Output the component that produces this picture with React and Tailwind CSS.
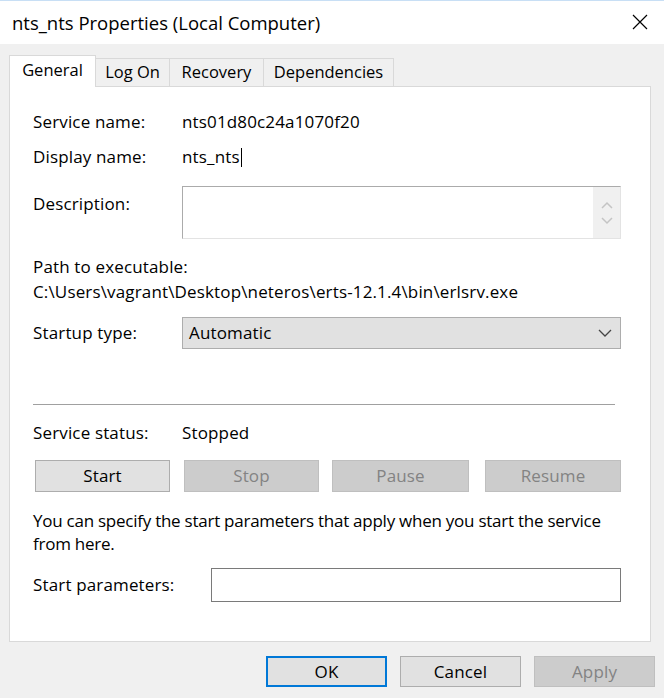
import React from "react";

const font = { fontFamily: '"Open Sans", "Noto Sans", sans-serif' };

function Btn({ label, disabled, className = "", primary }) {
  return (
    <div
      className={`flex items-center justify-center border ${
        primary
          ? "border-[#0078d7] border-2 bg-[#e1e1e1] text-black"
          : disabled
          ? "border-[#bfbfbf] bg-[#cccccc] text-[#838383]"
          : "border-[#adadad] bg-[#e1e1e1] text-black"
      } ${className}`}
    >
      {label}
    </div>
  );
}

export default function App() {
  return (
    <div
      className="w-[664px] h-[698px] bg-[#f0f0f0] text-[17px] text-black tracking-[0.15px] overflow-hidden flex flex-col"
      style={font}
    >
      {/* Title bar */}
      <div className="h-[44px] bg-white border-t border-[#c8dff5] flex items-center justify-between pl-[12px] pr-[16px] shrink-0">
        <span className="text-[18.5px] tracking-normal">nts_nts Properties (Local Computer)</span>
        <svg width="16" height="16" viewBox="0 0 16 16" className="mt-[-2px]">
          <path d="M1 1 L15 15 M15 1 L1 15" stroke="#000" strokeWidth="1.2" />
        </svg>
      </div>

      {/* Tabs */}
      <div className="flex items-end pl-[9px] h-[42px] shrink-0 relative z-10 text-[16.5px] tracking-normal">
        <div className="h-[32px] w-[87px] bg-white border border-b-0 border-[#d9d9d9] flex items-center justify-center mb-[-1px] pb-[2px]">
          General
        </div>
        <div className="h-[28px] w-[74px] bg-[#f0f0f0] border border-l-0 border-b-0 border-[#d9d9d9] flex items-center justify-center">
          Log On
        </div>
        <div className="h-[28px] w-[94px] bg-[#f0f0f0] border border-l-0 border-b-0 border-[#d9d9d9] flex items-center justify-center">
          Recovery
        </div>
        <div className="h-[28px] w-[130px] bg-[#f0f0f0] border border-l-0 border-b-0 border-[#d9d9d9] flex items-center justify-center">
          Dependencies
        </div>
      </div>

      {/* Panel */}
      <div className="ml-[9px] w-[642px] h-[556px] bg-white border border-[#d9d9d9] shrink-0 pl-[23px] pr-[29px] pt-[22px] flex flex-col">
        <div className="flex h-[26px] items-center">
          <span className="w-[149px]">Service name:</span>
          <span>nts01d80c24a1070f20</span>
        </div>
        <div className="flex h-[26px] items-center mt-[9px]">
          <span className="w-[149px]">Display name:</span>
          <span>nts_nts</span>
          <span className="w-[1px] h-[19px] bg-black ml-[1px]"></span>
        </div>
        <div className="flex mt-[16px]">
          <span className="w-[149px] pt-[5px]">Description:</span>
          <div className="flex-1 h-[53px] border border-[#ababab] border-r-[#e3e3e3] border-b-[#e3e3e3] flex justify-end">
            <div className="w-[27px] h-full bg-[#f0f0f0] flex flex-col items-center justify-center gap-[8px]">
              <svg width="12" height="8" viewBox="0 0 12 8"><path d="M1 7 L6 2 L11 7" fill="none" stroke="#c4c4c4" strokeWidth="1.5" /></svg>
              <svg width="12" height="8" viewBox="0 0 12 8"><path d="M1 1 L6 6 L11 1" fill="none" stroke="#c4c4c4" strokeWidth="1.5" /></svg>
            </div>
          </div>
        </div>
        <div className="mt-[15px] h-[25px] flex items-center">Path to executable:</div>
        <div className="h-[25px] flex items-center">C:\Users\vagrant\Desktop\neteros\erts-12.1.4\bin\erlsrv.exe</div>
        <div className="flex items-center mt-[13px]">
          <span className="w-[149px]">Startup type:</span>
          <div className="flex-1 h-[32px] border border-[#adadad] bg-[#e1e1e1] flex items-center justify-between pl-[6px] pr-[8px]">
            <span>Automatic</span>
            <svg width="14" height="8" viewBox="0 0 14 8"><path d="M1 1 L7 7 L13 1" fill="none" stroke="#444" strokeWidth="1.3" /></svg>
          </div>
        </div>
        <div className="mt-[55px] h-[1px] bg-[#a0a0a0] mr-[6px]"></div>
        <div className="flex items-center h-[26px] mt-[15px]">
          <span className="w-[149px]">Service status:</span>
          <span>Stopped</span>
        </div>
        <div className="flex mt-[14px] pl-[2px]">
          <Btn label="Start" className="w-[135px] h-[32px]" />
          <Btn label="Stop" disabled className="w-[135px] h-[32px] ml-[14px]" />
          <Btn label="Pause" disabled className="w-[137px] h-[32px] ml-[13px]" />
          <Btn label="Resume" disabled className="w-[136px] h-[32px] ml-[16px]" />
        </div>
        <div className="mt-[17px] leading-[23px] whitespace-nowrap tracking-[-0.25px]">
          You can specify the start parameters that apply when you start the service
          <br />
          from here.
        </div>
        <div className="flex items-center mt-[13px]">
          <span className="w-[178px]">Start parameters:</span>
          <div className="w-[411px] h-[34px] border border-[#7a7a7a] bg-white"></div>
        </div>
      </div>

      {/* Bottom buttons */}
      <div className="flex justify-end gap-[13px] pr-[9px] mt-[14px]">
        <Btn label="OK" primary className="w-[121px] h-[31px]" />
        <Btn label="Cancel" className="w-[121px] h-[31px]" />
        <Btn label="Apply" disabled className="w-[121px] h-[31px]" />
      </div>
    </div>
  );
}
